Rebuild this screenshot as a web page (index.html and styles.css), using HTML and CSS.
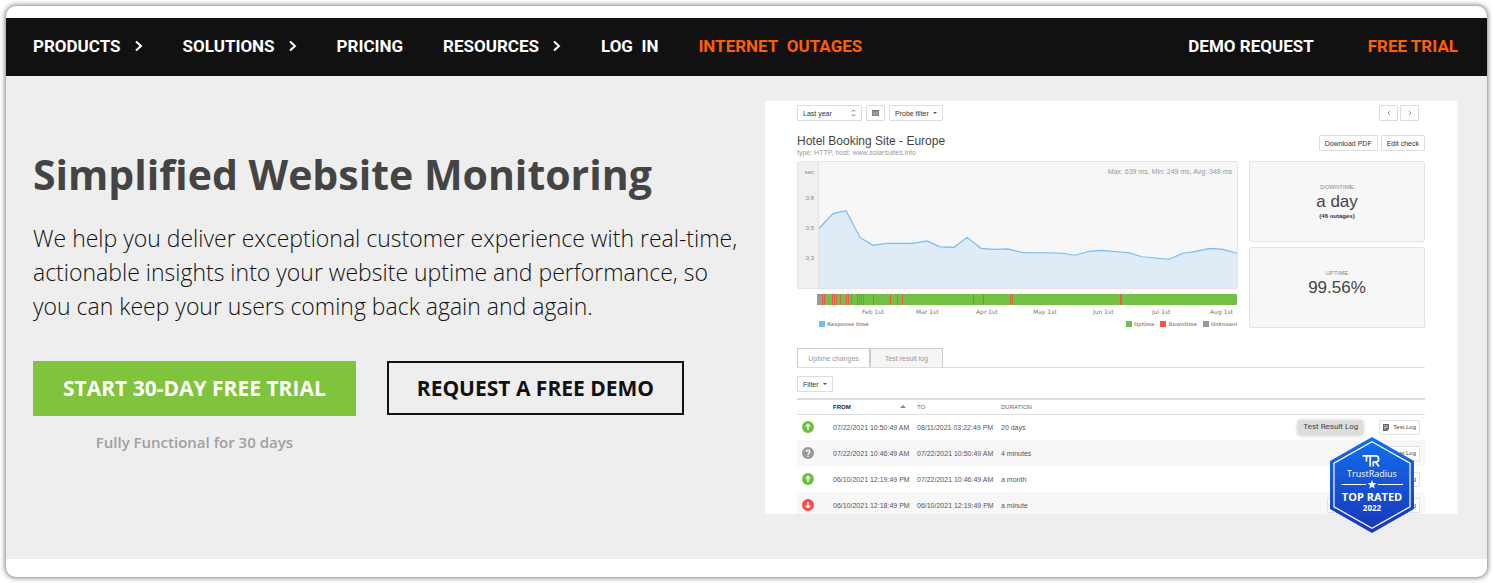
FILE: index.html
```html
<!DOCTYPE html>
<html lang="en">
<head>
<meta charset="utf-8">
<title>Simplified Website Monitoring</title>
<link rel="stylesheet" href="styles.css">
</head>
<body>
<div class="frame">
  <header class="nav">
    <nav class="nav-main">
      <a href="#">PRODUCTS <svg class="chev" viewBox="0 0 8 12"><path d="M1 1.500L6 6L1 10.500"/></svg></a>
      <a href="#">SOLUTIONS <svg class="chev" viewBox="0 0 8 12"><path d="M1 1.500L6 6L1 10.500"/></svg></a>
      <a href="#">PRICING</a>
      <a href="#">RESOURCES <svg class="chev" viewBox="0 0 8 12"><path d="M1 1.500L6 6L1 10.500"/></svg></a>
      <a href="#">LOG&nbsp; IN</a>
      <a href="#" class="hot">INTERNET&nbsp; OUTAGES</a>
    </nav>
    <nav class="nav-side">
      <a href="#">DEMO REQUEST</a>
      <a href="#" class="hot">FREE TRIAL</a>
    </nav>
  </header>

  <main class="hero">
    <section class="pitch">
      <h1>Simplified Website Monitoring</h1>
      <p class="lead">We help you deliver exceptional customer experience with real-time, actionable insights into your website uptime and performance, so you can keep your users coming back again and again.</p>
      <div class="cta">
        <div class="cta-col">
          <a href="#" class="btn btn-green">START 30-DAY FREE TRIAL</a>
          <span class="note">Fully Functional for 30 days</span>
        </div>
        <a href="#" class="btn btn-line">REQUEST A FREE DEMO</a>
      </div>
    </section>

    <section class="shot">
      <div class="panel">
        <div class="bar">
          <button class="mini select">Last year <svg class="updown" viewBox="0 0 5 8"><path d="M1 2.500L2.500 1L4 2.500M1 5.500L2.500 7L4 5.500"/></svg></button>
          <button class="mini square" aria-label="Calendar"><svg class="cal" viewBox="0 0 7 6"><path d="M0 0H7V6H0Z" fill="#777"/><path d="M0 2H7M0 4H7M2.300 2V6M4.600 2V6" stroke="#ddd" stroke-width=".4"/></svg></button>
          <button class="mini">Probe filter <i class="caret"></i></button>
          <span class="grow"></span>
          <div class="pager">
            <button class="mini square" aria-label="Previous"><svg class="arrow" viewBox="0 0 4 6"><path d="M3 1L1 3L3 5"/></svg></button>
            <button class="mini square" aria-label="Next"><svg class="arrow" viewBox="0 0 4 6"><path d="M1 1L3 3L1 5"/></svg></button>
          </div>
        </div>

        <div class="title-row">
          <div class="titles">
            <h2>Hotel Booking Site - Europe</h2>
            <p>type: HTTP, host: www.solarsuites.info</p>
          </div>
          <button class="mini">Download PDF</button>
          <button class="mini">Edit check</button>
        </div>

        <div class="stats">
          <div class="chart-col">
            <div class="chart">
              <div class="axis"><span>sec</span><span>0,8</span><span>0,5</span><span>0,3</span></div>
              <div class="plot">
                <span class="summary">Max: 639 ms, Min: 249 ms, Avg: 348 ms</span>
                <svg viewBox="0 0 418 127" preserveAspectRatio="none">
                  <path fill="#dfebf5" d="M0 67L14 52L27 49L41 76L54 84L67 82L94 82L108 79.500L121 85.500L135 86L148 76L162 87L175 88L189 87.500L202 91L215 91.500L229 91.500L243 92L256 94L270 90L283 89L310 91.500L323 95.500L350 98L364 92L377 90L391 87L404 88L418 92V127H0Z"/>
                  <path fill="none" stroke="#74bdf7" stroke-width="1.200" d="M0 67L14 52L27 49L41 76L54 84L67 82L94 82L108 79.500L121 85.500L135 86L148 76L162 87L175 88L189 87.500L202 91L215 91.500L229 91.500L243 92L256 94L270 90L283 89L310 91.500L323 95.500L350 98L364 92L377 90L391 87L404 88L418 92"/>
                </svg>
              </div>
            </div>
            <svg class="timeline" viewBox="0 0 420 11" preserveAspectRatio="none">
              <path fill="#72c144" d="M0 0H420V11H0Z"/>
              <path fill="#999" d="M0 0H5V11H0Z"/>
              <path stroke="#ef5648" d="M5.500 0V11M7.500 0V11M15.500 0V11M17.500 0V11M29.500 0V11M31.500 0V11M34.500 0V11M56.500 0V11M73.500 0V11M85.500 0V11M156.500 0V11M166.500 0V11"/>
              <path stroke="#cc7044" d="M19.500 0V11M23.500 0V11M40.500 0V11M42.500 0V11M44.500 0V11M46.500 0V11M80.500 0V11M193.500 0V11M195.500 0V11"/>
              <path stroke="#ff4f4a" stroke-width="2" d="M304 0V11"/>
            </svg>
            <div class="months"><span>Feb 1st</span><span>Mar 1st</span><span>Apr 1st</span><span>May 1st</span><span>Jun 1st</span><span>Jul 1st</span><span>Aug 1st</span></div>
            <div class="legend">
              <span class="key blue">Response time</span>
              <span class="grow"></span>
              <span class="key green">Uptime</span>
              <span class="key red">Downtime</span>
              <span class="key gray">Unknown</span>
            </div>
          </div>
          <div class="cards">
            <div class="card"><small>DOWNTIME</small><strong>a day</strong><em>(46 outages)</em></div>
            <div class="card"><small>UPTIME</small><strong>99.56%</strong></div>
          </div>
        </div>

        <div class="tabs">
          <button class="tab">Uptime changes</button>
          <button class="tab active">Test result log</button>
        </div>
        <button class="mini filter">Filter <i class="caret"></i></button>

        <table class="log">
          <thead>
            <tr><th class="c-icon"></th><th class="c-date sorted"><span>FROM <i class="up"></i></span></th><th class="c-date">TO</th><th>DURATION</th><th class="c-act"></th></tr>
          </thead>
          <tbody>
            <tr>
              <td><svg class="dot" viewBox="0 0 12 12"><circle cx="6" cy="6" r="6" fill="#6cc040"/><path d="M6 9V3.500M3.800 5.600L6 3.400L8.200 5.600"/></svg></td>
              <td>07/22/2021 10:50:49 AM</td><td>08/11/2021 03:22:49 PM</td><td>20 days</td>
              <td><div class="acts"><span class="tip">Test Result Log</span><button class="logbtn"><svg viewBox="0 0 6 7"><path fill="#666" d="M0 0H6V5L4 7H0Z"/><path stroke="#fff" stroke-width=".6" d="M1 1.800H5M1 3.400H5M1 5H3"/></svg>Test Log</button></div></td>
            </tr>
            <tr>
              <td><svg class="dot" viewBox="0 0 12 12"><circle cx="6" cy="6" r="6" fill="#999"/><path d="M4.200 4.700C4.200 2.600 7.800 2.600 7.800 4.700C7.800 6 6 6 6 7.400M6 8.500V9.700"/></svg></td>
              <td>07/22/2021 10:46:49 AM</td><td>07/22/2021 10:50:49 AM</td><td>4 minutes</td>
              <td><div class="acts"><button class="logbtn"><svg viewBox="0 0 6 7"><path fill="#666" d="M0 0H6V5L4 7H0Z"/></svg>Test Log</button></div></td>
            </tr>
            <tr>
              <td><svg class="dot" viewBox="0 0 12 12"><circle cx="6" cy="6" r="6" fill="#6cc040"/><path d="M6 9V3.500M3.800 5.600L6 3.400L8.200 5.600"/></svg></td>
              <td>06/10/2021 12:19:49 PM</td><td>07/22/2021 10:46:49 AM</td><td>a month</td>
              <td><div class="acts"><button class="logbtn"><svg viewBox="0 0 6 7"><path fill="#666" d="M0 0H6V5L4 7H0Z"/></svg>Test Log</button></div></td>
            </tr>
            <tr>
              <td><svg class="dot" viewBox="0 0 12 12"><circle cx="6" cy="6" r="6" fill="#fb4c4a"/><path d="M6 3V8.500M3.800 6.400L6 8.600L8.200 6.400"/></svg></td>
              <td>06/10/2021 12:18:49 PM</td><td>06/10/2021 12:19:49 PM</td><td>a minute</td>
              <td><div class="acts"><button class="logbtn wide"><svg viewBox="0 0 6 7"><path fill="#666" d="M0 0H6V5L4 7H0Z"/></svg>Test Log</button></div></td>
            </tr>
          </tbody>
        </table>
      </div>

      <svg class="badge" viewBox="0 0 84 96" role="img" aria-label="TrustRadius Top Rated 2022">
        <defs><linearGradient id="bg" x1="0" y1="0" x2="0" y2="1"><stop offset="0" stop-color="#1170ef"/><stop offset="1" stop-color="#1a36b8"/></linearGradient></defs>
        <path fill="url(#bg)" d="M42 0L84 24V72L42 96L0 72V24Z"/>
        <path fill="none" stroke="#fff" stroke-width="1.200" d="M42 4.800L80 26.200V69.800L42 91.200L4 69.800V26.200Z"/>
        <path fill="none" stroke="#fff" stroke-width="1.700" d="M32.500 18.800H40.200V29.500M36.500 19V24.500M40.200 18.800H45.500C49.700 18.800 49.700 25 45.500 25H43.300V29.500M45.500 25L49 29.500"/>
        <text class="b-name" x="42" y="39.500">TrustRadius</text>
        <path stroke="#fff" stroke-width="1" d="M11.500 47.500H36M48 47.500H73"/>
        <path fill="#fff" d="M42 43L43.200 46.100L46.500 46.300L43.900 48.400L44.800 51.600L42 49.800L39.200 51.600L40.100 48.400L37.500 46.300L40.800 46.100Z"/>
        <text class="b-top" x="42" y="64">TOP RATED</text>
        <text class="b-year" x="42" y="74">2022</text>
      </svg>
    </section>
  </main>
</div>
</body>
</html>
```
FILE: styles.css
```css
* { box-sizing: border-box; }
body {
  margin: 0;
  padding: 6px;
  background: #fff;
  font-family: "Open Sans", sans-serif;
}
a { color: inherit; text-decoration: none; }
h1, h2, p { margin: 0; }
.grow { flex: 1; }

.frame {
  padding: 12px 0 18px;
  background: #fff;
  border-radius: 10px;
  box-shadow: 0 0 5px 1px rgba(0, 0, 0, .5);
  overflow: hidden;
}

/* navigation */
.nav {
  display: flex;
  justify-content: space-between;
  align-items: center;
  height: 58px;
  padding: 0 29px 2px 27px;
  background: #111;
  color: #fff;
  font: 700 17px "Roboto", sans-serif;
  white-space: nowrap;
}
.nav-main { display: flex; gap: 40px; }
.nav-side { display: flex; gap: 54px; }
.nav a { display: flex; align-items: center; }
.nav .hot { color: #ff5f00; }
.chev { width: 8px; height: 12px; margin-left: 14px; fill: none; stroke: #fff; stroke-width: 2; }

/* hero */
.hero {
  display: grid;
  grid-template-columns: 732fr 693fr;
  padding: 25px 29px 45px 27px;
  background: #eee;
}
.pitch { padding-top: 44px; padding-right: 20px; }
h1 { color: #444; font-size: 41px; line-height: 58px; font-weight: 700; white-space: nowrap; }
.lead { margin-top: 18px; color: #111; font-size: 23px; line-height: 34px; font-weight: 300; }
.cta { display: flex; align-items: flex-start; gap: 31px; margin-top: 38px; }
.cta-col { display: flex; flex-direction: column; align-items: center; gap: 15px; }
.btn { padding: 0 28px; border: 2px solid #111; font-size: 21px; line-height: 50px; font-weight: 700; white-space: nowrap; color: #111; }
.btn-green { background: #80c33d; border-color: #80c33d; color: #fff; line-height: 51px; }
.note { color: #a0a0a0; font-size: 15px; line-height: 22px; font-weight: 600; }

/* product panel */
.shot { position: relative; }
.panel {
  aspect-ratio: 693 / 413;
  padding: 4px 32px 0 32px;
  border-right: 1px solid #f6f6f6;
  background: #fff;
  color: #555;
  font-family: "Liberation Sans", sans-serif;
  font-size: 6px;
  overflow: hidden;
}
.panel button { font-family: inherit; }
.bar { display: flex; gap: 4px; }
.pager { display: flex; gap: 2px; margin-right: 6px; }
.mini {
  display: flex;
  align-items: center;
  gap: 4px;
  height: 16px;
  padding: 0 5px;
  border: 1px solid #ddd;
  border-radius: 1px;
  background: #fff;
  color: #333;
  font-size: 7px;
}
.select { width: 65px; justify-content: space-between; }
.square { width: 19px; justify-content: center; padding: 0; }
.caret { border: 2px solid transparent; border-top-color: #555; border-bottom: 0; }
.updown { width: 5px; height: 8px; fill: none; stroke: #666; }
.cal { width: 7px; height: 6px; }
.arrow { width: 4px; height: 6px; fill: none; stroke: #777; stroke-width: .8; }

.title-row { display: flex; align-items: flex-start; gap: 3px; margin-top: 13px; }
.titles { flex: 1; }
h2 { color: #444; font-size: 12px; line-height: 14px; font-weight: 400; }
.titles p { color: #999; font-size: 7px; line-height: 9px; }
.title-row .mini { margin-top: 1px; }

.stats { display: grid; grid-template-columns: 441fr 176fr; gap: 11px; margin-top: 4px; }
.chart { display: flex; height: 128px; border: 1px solid #e4e4e4; border-radius: 2px; background: #f7f7f7; }
.axis {
  display: flex;
  flex-direction: column;
  width: 21px;
  padding: 6px 4px 0 0;
  border-right: 1px solid #e2e2e2;
  background: #f0f0f0;
  color: #888;
  line-height: 8px;
  text-align: right;
}
.axis span + span { margin-top: 22px; }
.axis span:nth-child(2) { margin-top: 18px; }
.plot { position: relative; flex: 1; }
.plot svg { display: block; width: 100%; height: 100%; }
.summary { position: absolute; top: 6px; right: 5px; color: #999; font-size: 7px; line-height: 8px; }
.timeline { display: block; width: 420px; max-width: 100%; height: 11px; margin: 5px 1px 0 auto; border-radius: 1px; }
.months, .legend { color: #777; font-family: "DejaVu Sans", sans-serif; line-height: 8px; white-space: nowrap; }
.months { display: grid; grid-template-columns: 54fr 60fr 57fr 60fr 59fr 58fr 28fr; margin: 3px 0 0 65px; }
.legend { display: flex; gap: 6px; margin: 4px 1px 0 22px; font-size: 5px; font-weight: 700; color: #999; }
.key { display: flex; align-items: center; gap: 2px; }
.key::before { content: ""; width: 6px; height: 6px; background: #6ebcf8; }
.green::before { background: #72c144; }
.red::before { background: #ff4f4a; }
.gray::before { background: #999; }

.cards { display: flex; flex-direction: column; gap: 5px; }
.card {
  display: flex;
  flex-direction: column;
  align-items: center;
  height: 81px;
  padding-top: 21px;
  border: 1px solid #e4e4e4;
  border-radius: 2px;
  background: #f7f7f7;
}
.card small { color: #888; font-size: 6px; line-height: 8px; }
.card strong { color: #444; font-size: 17px; line-height: 22px; font-weight: 400; }
.card em { line-height: 7px; font-style: normal; font-weight: 700; color: #333; }

.tabs { display: flex; margin-top: 20px; border-bottom: 1px solid #ddd; }
.tab { width: 73px; height: 19px; padding: 0; border: 1px solid #ccc; border-bottom: 0; background: #fff; color: #999; font-size: 7px; }
.active { background: #f5f5f5; }
.filter { margin-top: 8px; }

.log { width: 100%; margin-top: 6px; border-collapse: collapse; border-top: 2px solid #ddd; table-layout: fixed; }
.log th { height: 15px; padding: 0; border-bottom: 1px solid #ddd; color: #666; text-align: left; font-weight: 400; }
.log .sorted { color: #222; font-weight: 700; }
.sorted span { display: flex; justify-content: space-between; align-items: center; padding-right: 11px; }
.up { border: 3px solid transparent; border-bottom-color: #888; border-top: 0; }
.c-icon { width: 36px; }
.c-date { width: 84px; }
.c-act { width: 136px; }
.log td { height: 26px; padding: 0; font-size: 7px; white-space: nowrap; }
.log tbody tr:nth-child(even) { background: #f7f7f7; }
.dot { display: block; width: 12px; height: 12px; margin-left: 5px; fill: none; stroke: #fff; stroke-width: 1.400; }
.dot circle { stroke: none; }
.acts { display: flex; justify-content: flex-end; align-items: center; gap: 16px; padding-right: 5px; }
.tip { padding: 0 5px; border-radius: 1px; background: #ddd; box-shadow: 0 1px 4px rgba(0, 0, 0, .25); color: #444; font: 8px/14px "Roboto", sans-serif; }
.logbtn { display: flex; align-items: center; justify-content: flex-end; gap: 4px; height: 15px; padding: 0 3px; border: 1px solid #e2e2e2; border-radius: 1px; background: #fff; color: #444; font-size: 6px; }
.logbtn svg { width: 6px; height: 7px; }
.wide { width: 93px; }

.badge { position: absolute; right: 44px; bottom: -19px; width: 84px; height: 96px; }
.badge text { fill: #fff; text-anchor: middle; font-family: "Open Sans", sans-serif; }
.badge .b-name { font-size: 9px; font-weight: 400; }
.badge .b-top { font-size: 11px; font-weight: 700; }
.badge .b-year { font-size: 8px; font-weight: 700; }
```
